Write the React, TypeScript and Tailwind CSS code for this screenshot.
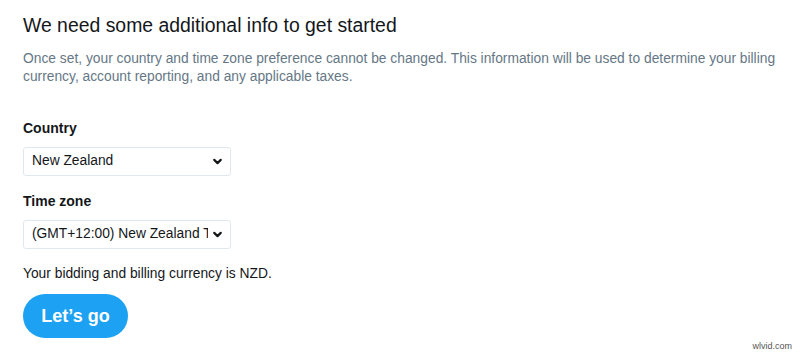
import { ChevronDown } from 'lucide-react'

function Field({ label, value, options }: { label: string; value: string; options: string[] }) {
  return (
    <div className="mt-[16px] first:mt-0">
      <p className="text-[14px] font-bold leading-[18px] text-[#14171a]">{label}</p>
      <div className="relative mt-[10px] w-[208px]">
        <select
          defaultValue={value}
          className="h-[29px] w-full appearance-none overflow-hidden rounded-[3px] border border-[#e1e8ed] bg-white pl-[8px] pr-[22px] text-[13.8px] text-[#14171a] outline-none"
        >
          {options.map((o) => (
            <option key={o} value={o}>
              {o}
            </option>
          ))}
        </select>
        <ChevronDown
          className="pointer-events-none absolute right-[7px] top-[8px] h-[13px] w-[13px] text-[#14171a]"
          strokeWidth={4}
        />
      </div>
    </div>
  )
}

export default function App() {
  return (
    <div className="relative h-[355px] w-[800px] bg-white font-['Liberation_Sans',Arial,sans-serif]">
      <div className="px-[23px] pt-[11px]">
        <h1 className="text-[19.4px] leading-[28px] text-[#14171a]">We need some additional info to get started</h1>
        <p className="mt-[11px] text-[13.8px] leading-[18px] text-[#657786]">
          Once set, your country and time zone preference cannot be changed. This information will be used to determine your billing currency, account reporting, and any applicable taxes.
        </p>
        <div className="mt-[33px]">
          <Field label="Country" value="New Zealand" options={['New Zealand', 'Australia', 'United States']} />
          <Field
            label="Time zone"
            value="(GMT+12:00) New Zealand Time"
            options={['(GMT+12:00) New Zealand Time', '(GMT+10:00) Sydney']}
          />
        </div>
        <p className="mt-[15px] text-[13.8px] leading-[20px] text-[#14171a]">Your bidding and billing currency is NZD.</p>
        <button className="mt-[10px] h-[44px] w-[105px] rounded-full bg-[#1da1f2] text-[18px] font-bold text-white">
          Let’s go
        </button>
      </div>
      <span className="absolute bottom-[2px] right-[8px] text-[9px] text-[#555]">wlvid.com</span>
    </div>
  )
}
